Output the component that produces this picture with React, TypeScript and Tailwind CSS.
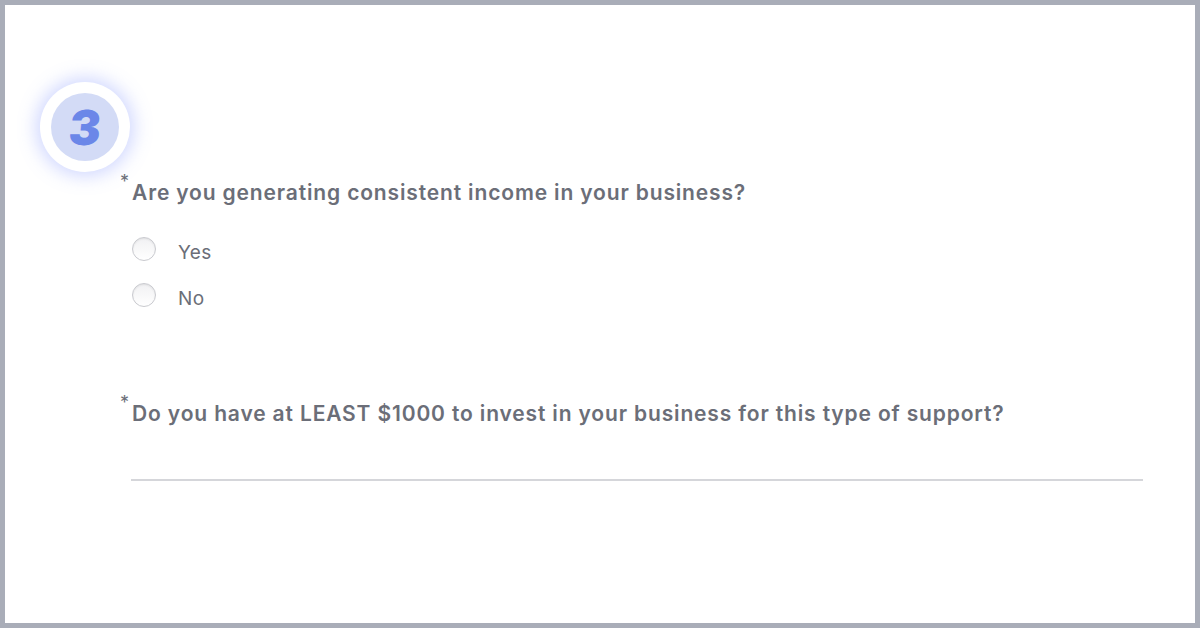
import React, { useState } from "react";

const Radio: React.FC<{ label: string; checked: boolean; onSelect: () => void }> = ({ label, checked, onSelect }) => (
  <label className="flex items-center h-[24px] cursor-pointer" onClick={onSelect}>
    <span className="relative w-[24px] h-[24px] rounded-full border border-[#c9cacf] bg-gradient-to-b from-[#f1f1f3] to-white shadow-[inset_0_1px_2px_rgba(0,0,0,0.08)]">
      {checked && <span className="absolute inset-[6px] rounded-full bg-[#6b87e8]" />}
    </span>
    <span className="ml-[22px] text-[19px] text-[#6b6e78] leading-none pt-[7px] tracking-[0.4px]">{label}</span>
  </label>
);

const App: React.FC = () => {
  const [answer, setAnswer] = useState("");

  return (
    <div className="w-[1200px] h-[628px] bg-[#a9adb8] p-[5px]" style={{ fontFamily: "Inter, 'Open Sans', 'Liberation Sans', sans-serif" }}>
      <div className="w-full h-full bg-white pt-[77px] pl-[35px] pr-[52px]">
        {/* step badge */}
        <div className="w-[90px] h-[90px] rounded-full bg-white flex items-center justify-center shadow-[0_0_18px_4px_rgba(120,140,255,0.35)]">
          <div className="w-[68px] h-[68px] rounded-full bg-[#d3dbf6] flex items-center justify-center">
            <span className="text-[48px] font-black text-[#6b87e8] leading-none -skew-x-6 mt-[2px]">3</span>
          </div>
        </div>

        <div className="pl-[80px]">
          <div className="flex items-start">
            <span className="text-[18px] text-[#6b6e78] leading-none mt-[1px] mr-[3px]">*</span>
            <h2 className="text-[21px] font-semibold text-[#6b6e78] leading-none mt-[10px] tracking-[0.85px]">
              Are you generating consistent income in your business?
            </h2>
          </div>

          <div className="flex flex-col gap-[22px] mt-[34px] pl-[12px]">
            <Radio label="Yes" checked={answer === "yes"} onSelect={() => setAnswer("yes")} />
            <Radio label="No" checked={answer === "no"} onSelect={() => setAnswer("no")} />
          </div>

          <div className="flex items-start mt-[86px]">
            <span className="text-[18px] text-[#6b6e78] leading-none mt-[1px] mr-[3px]">*</span>
            <h2 className="text-[21px] font-semibold text-[#6b6e78] leading-none mt-[10px] tracking-[0.85px]">
              Do you have at LEAST $1000 to invest in your business for this type of support?
            </h2>
          </div>

          <input
            type="text"
            className="block w-[1012px] ml-[11px] mt-[37px] h-[20px] border-0 border-b-2 border-[#d5d6da] outline-none text-[18px] text-[#6b6e78]"
          />
        </div>
      </div>
    </div>
  );
};

export default App;
